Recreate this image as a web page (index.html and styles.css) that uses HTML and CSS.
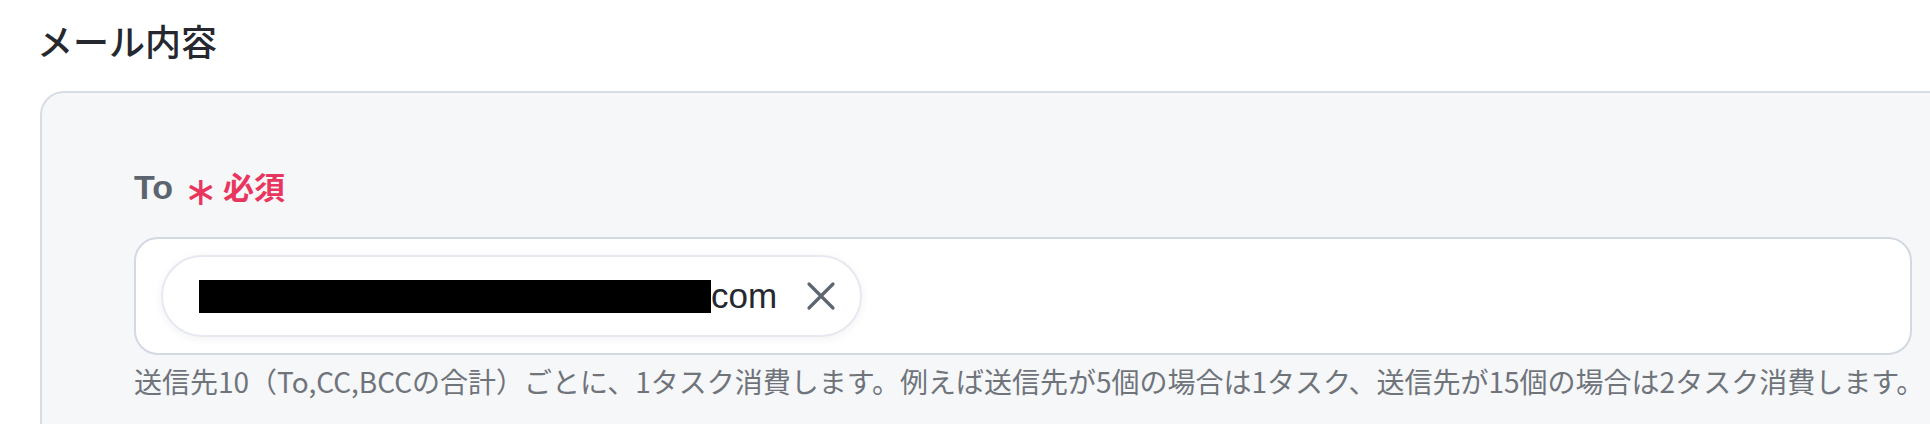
FILE: index.html
```html
<!DOCTYPE html>
<html lang="ja">
<head>
    <meta charset="UTF-8">
    <meta name="viewport" content="width=device-width, initial-scale=1.0">
    <title>メール内容</title>
    <link rel="stylesheet" href="styles.css">
</head>
<body>
    <div class="page">
        <h2 class="section-title">メール内容</h2>

        <div class="panel">
            <div class="field">
                <label class="field-label"><span class="label-text">To</span><span class="required-mark">&#x2217;</span><span class="required-text">必須</span></label>

                <div class="recipient-box">
                    <div class="chip">
                        <span class="redacted"></span>
                        <span class="chip-text">com</span>
                        <button class="chip-remove" type="button" aria-label="削除">
                            <svg width="30" height="30" viewBox="0 0 30 30">
                                <path d="M3 3 L27 27 M27 3 L3 27" stroke="#5d6571" stroke-width="3.2" stroke-linecap="round" fill="none"/>
                            </svg>
                        </button>
                    </div>
                </div>

                <p class="field-help">送信先10（To,CC,BCCの合計）ごとに、1タスク消費します。例えば送信先が5個の場合は1タスク、送信先が15個の場合は2タスク消費します。</p>
            </div>
        </div>
    </div>
</body>
</html>
```

FILE: styles.css
```css
html, body {
    overflow: hidden;
}

body {
    font-family: "Noto Sans CJK JP", "Noto Sans", sans-serif;
    margin: 0;
    background-color: #fff;
    color: #25292f;
}

.page {
    padding: 16px 0 0 40px;
}

.section-title {
    margin: 0 0 0 -3px;
    font-size: 36px;
    line-height: 48px;
    font-weight: 500;
    color: #25292f;
}

.panel {
    margin-top: 27px;
    width: 1930px;
    min-height: 400px;
    padding: 70px 0 0 92px;
    background-color: #f6f7f9;
    border: 2px solid #d8dde5;
    border-radius: 24px;
    box-sizing: border-box;
}

.field {
    width: 1778px;
}

.field-label {
    display: block;
    height: 44px;
    font-size: 34px;
    line-height: 44px;
    color: #5c6470;
    white-space: nowrap;
}

.label-text {
    font-family: "Liberation Sans", "Noto Sans CJK JP", sans-serif;
    font-size: 34px;
    font-weight: 700;
}

.required-mark {
    margin-left: 11px;
    font-size: 40px;
    vertical-align: -6px;
    color: #e8365f;
}

.required-text {
    margin-left: 5px;
    font-size: 31px;
    font-weight: 700;
    color: #e8365f;
}

.recipient-box {
    margin-top: 30px;
    padding: 16px 25px;
    background-color: #fff;
    border: 2px solid #d3d9e2;
    border-radius: 24px;
    display: flex;
}

.chip {
    display: flex;
    align-items: center;
    height: 82px;
    padding: 0 24px 0 36px;
    background-color: #fff;
    border: 2px solid #e6e9ef;
    border-radius: 41px;
    box-sizing: border-box;
    box-shadow: 0 2px 10px rgba(30, 40, 60, 0.06);
}

.redacted {
    display: block;
    width: 512px;
    height: 33px;
    background-color: #000;
}

.chip-text {
    font-family: "Liberation Sans", "Noto Sans CJK JP", sans-serif;
    font-size: 35px;
    color: #25292f;
}

.chip-remove {
    margin-left: 29px;
    padding: 0;
    border: none;
    background: transparent;
    display: flex;
    cursor: pointer;
}

.field-help {
    margin: 6px 0 0;
    font-size: 28px;
    line-height: 40px;
    color: #6f747b;
    white-space: nowrap;
}
```
